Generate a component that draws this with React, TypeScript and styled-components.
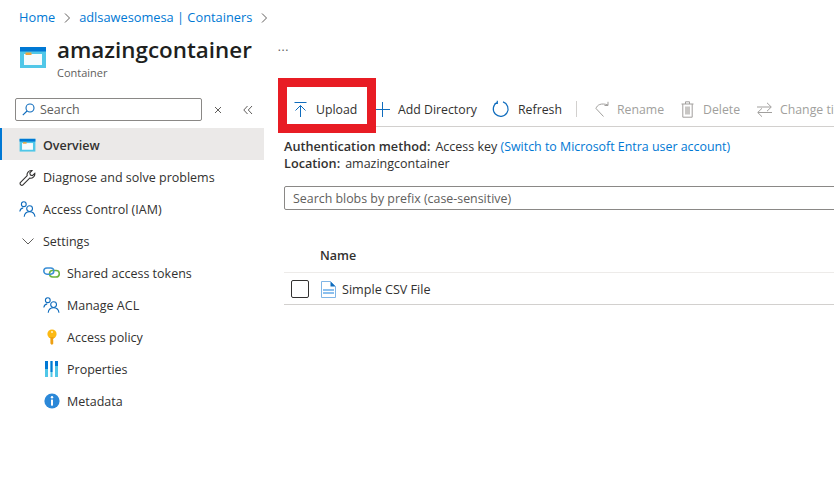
import { FC, ReactNode } from "react";
import styled, { createGlobalStyle } from "styled-components";

const GlobalStyle = createGlobalStyle`
  html, body {
    margin: 0;
    background: #fff;
    overflow: hidden;
  }
  body {
    font-family: "Open Sans", "Noto Sans", sans-serif;
    font-size: 12.5px;
    color: #323130;
  }
`;

const Page = styled.div`
  width: 834px;
  height: 485px;
  overflow: hidden;
`;

const Breadcrumb = styled.div`
  display: flex;
  align-items: center;
  gap: 8px;
  height: 34px;
  padding-left: 19px;
  font-size: 12.8px;
  color: #0078d4;
`;

const Chevron = styled.svg`
  width: 8px;
  height: 10px;
  margin-top: 1px;
`;

const Header = styled.div`
  display: flex;
  height: 50px;
  padding-left: 19px;
`;

const HeaderIcon = styled.div`
  width: 38px;
  padding-top: 10px;
`;

const Title = styled.div`
  font-size: 22.4px;
  line-height: 30px;
  font-weight: 600;
  color: #201f1e;
  margin-top: 1px;
`;

const Subtitle = styled.div`
  font-size: 11px;
  line-height: 16px;
  color: #605e5c;
`;

const More = styled.div`
  margin: 4px 0 0 26px;
  font-size: 12px;
  letter-spacing: 0.5px;
  color: #605e5c;
`;

const Body = styled.div`
  display: flex;
`;

const Sidebar = styled.nav`
  flex: 0 0 264px;
  margin-top: 14px;
`;

const SearchRow = styled.div`
  display: flex;
  align-items: center;
  height: 23px;
  padding-left: 15px;
  margin-bottom: 7px;
`;

const SideSearch = styled.div`
  box-sizing: border-box;
  display: flex;
  align-items: center;
  gap: 5px;
  width: 187px;
  height: 23px;
  padding-left: 6px;
  border: 1px solid #8a8886;
  border-radius: 2px;
  color: #605e5c;
`;

const SideAction = styled.svg<{ $gap: number }>`
  width: 10px;
  height: 10px;
  margin-left: ${({ $gap }) => $gap}px;
`;

const NavRow = styled.div<{ $active?: boolean; $sub?: boolean }>`
  box-sizing: border-box;
  display: flex;
  align-items: center;
  gap: 7px;
  height: 32px;
  padding: 2px 0 0 ${({ $sub }) => ($sub ? "41px" : "17px")};
  color: #323130;
  background: ${({ $active }) => ($active ? "#ebe9e8" : "transparent")};
  border-left: 2px solid ${({ $active }) => ($active ? "#0078d4" : "transparent")};
  font-weight: ${({ $active }) => ($active ? 600 : 400)};
`;

const NavIcon = styled.div`
  display: flex;
  align-items: center;
  justify-content: center;
  width: 17px;
  height: 17px;
`;

const Main = styled.main`
  position: relative;
  flex: 1;
  min-width: 0;
  margin-top: -6px;
  padding: 6px 0 0 20px;
  overflow: hidden;
`;

const Toolbar = styled.div`
  box-sizing: border-box;
  display: flex;
  align-items: center;
  height: 43px;
  padding-top: 8px;
  border-bottom: 1px solid #d2d0ce;
  font-size: 12.3px;
  white-space: nowrap;
`;

const ToolButton = styled.div<{ $disabled?: boolean; $width: number; $gap?: number }>`
  flex: 0 0 ${({ $width }) => $width}px;
  display: flex;
  align-items: center;
  gap: ${({ $gap }) => $gap ?? 7}px;
  color: ${({ $disabled }) => ($disabled ? "#a19f9d" : "#323130")};
`;

const UploadIcon = styled.svg`
  margin-left: 9px;
  margin-right: 1px;
`;

const Divider = styled.div`
  flex: 0 0 1px;
  height: 16px;
  background: #d2d0ce;
  margin-right: 18px;
`;

const Highlight = styled.div`
  position: absolute;
  left: 14px;
  top: 0;
  box-sizing: border-box;
  width: 98px;
  height: 55px;
  border: 9px solid #e81c24;
  pointer-events: none;
`;

const Info = styled.div`
  margin-top: 11px;
  line-height: 17px;
`;

const InfoLabel = styled.span`
  font-weight: 600;
  font-size: 12.7px;
  margin-right: 5px;
`;

const InfoLink = styled.span`
  color: #0078d4;
  font-size: 12.4px;
`;

const BlobSearch = styled.div`
  box-sizing: border-box;
  display: flex;
  align-items: center;
  width: 600px;
  height: 24px;
  margin-top: 14px;
  padding-left: 8px;
  border: 1px solid #8a8886;
  border-radius: 2px;
  font-size: 12.4px;
  color: #605e5c;
`;

const TableRow = styled.div<{ $head?: boolean }>`
  box-sizing: border-box;
  display: flex;
  align-items: center;
  height: ${({ $head }) => ($head ? "34px" : "32px")};
  margin-top: ${({ $head }) => ($head ? "29px" : "0")};
  padding-left: ${({ $head }) => ($head ? "36px" : "7px")};
  padding-top: ${({ $head }) => ($head ? "0" : "1px")};
  border-bottom: 1px solid ${({ $head }) => ($head ? "#edebe9" : "#d2d0ce")};
  font-weight: ${({ $head }) => ($head ? 600 : 400)};
`;

const Checkbox = styled.div`
  box-sizing: border-box;
  width: 18px;
  height: 18px;
  margin-right: 12px;
  border: 1px solid #323130;
  border-radius: 2px;
`;

const FileName = styled.span`
  margin-left: 6px;
  font-size: 12.6px;
`;

const ContainerIcon: FC<{ size: number }> = ({ size }) => (
  <svg width={size} height={size} viewBox="0 0 28 28">
    <rect x="1" y="3" width="26" height="21" fill="#50c7e8" />
    <rect x="1" y="3" width="26" height="4.5" fill="#0078d4" />
    <rect x="5" y="10" width="18" height="11" fill="#f6fbfd" />
    <rect x="6.5" y="8.5" width="6" height="2.5" fill="#eda33c" />
  </svg>
);

const Wrench = () => (
  <svg width="17" height="17" viewBox="0 0 17 17" fill="none" stroke="#323130" strokeWidth="1.1">
    <path d="M1.3 13.6 8.2 6.7C7.5 4.2 9.6 1.2 13 1.6L10.8 4l.6 2 2 .6 2.4-2.3c.5 3.3-2.5 5.5-5.1 4.8l-7 7c-1.2 1-3.2-1-2.4-2.5Z" />
  </svg>
);

const People = () => (
  <svg width="17" height="17" viewBox="0 0 17 17" fill="none" stroke="#0f6cbd" strokeWidth="1.1">
    <circle cx="4.8" cy="3.2" r="2.4" />
    <circle cx="10.6" cy="7.6" r="2.9" />
    <path d="M.8 10.5c.3-2 1.6-3.4 3.4-3.6M5.2 15.8c.3-3 2.5-5 5.4-5s5 2 5.4 5" />
  </svg>
);

const Links = () => (
  <svg width="17" height="12" viewBox="0 0 17 12" fill="none" strokeWidth="1.5">
    <rect x="6.5" y="3.6" width="9.8" height="6.4" rx="3.2" stroke="#6cb33f" />
    <rect x="0.8" y="1" width="10" height="6.2" rx="3.1" stroke="#3b8fd6" />
  </svg>
);

const Key = () => (
  <svg width="12" height="17" viewBox="0 0 12 17">
    <circle cx="6" cy="5" r="4.6" fill="#fcb913" />
    <path d="M4.4 8h3.2v1.6L6.9 11l.7 1-.7 1 .7 1L6 16l-1.6-1.6Z" fill="#ed9f12" />
    <circle cx="6" cy="3" r="1" fill="#fff3c4" />
  </svg>
);

const Properties = () => (
  <svg width="13" height="16" viewBox="0 0 13 16">
    <rect x="0" y="0" width="3" height="16" fill="#50c7e8" />
    <rect x="0" y="0" width="3" height="8" fill="#0078d4" />
    <rect x="5.5" y="0" width="2" height="16" fill="#50c7e8" />
    <rect x="5.5" y="0" width="2" height="11" fill="#0078d4" />
    <rect x="10" y="0" width="3" height="16" fill="#50c7e8" />
    <rect x="10" y="0" width="3" height="5" fill="#0078d4" />
  </svg>
);

const InfoIcon = () => (
  <svg width="16" height="16" viewBox="0 0 16 16">
    <circle cx="8" cy="8" r="7.6" fill="#2b88d8" />
    <circle cx="8" cy="4.3" r="1.2" fill="#fff" />
    <rect x="7" y="6.6" width="2" height="6" fill="#fff" />
  </svg>
);

const FileIcon = () => (
  <svg width="15" height="17" viewBox="0 0 15 17">
    <path d="M.5.5h9l5 5v11H.5Z" fill="#fff" stroke="#7fb5e6" />
    <path d="M9.5.5v5h5Z" fill="#0f6cbd" />
    <rect x="2" y="8" width="11" height="2" fill="#8cc0ee" />
    <rect x="2" y="11" width="11" height="2" fill="#8cc0ee" />
  </svg>
);

const navTop: { label: string; icon: ReactNode; active?: boolean }[] = [
  { label: "Overview", icon: <ContainerIcon size={17} />, active: true },
  { label: "Diagnose and solve problems", icon: <Wrench /> },
  { label: "Access Control (IAM)", icon: <People /> },
  {
    label: "Settings",
    icon: (
      <svg width="12" height="7" viewBox="0 0 12 7" fill="none" stroke="#605e5c">
        <path d="M.5.5 6 6 11.5.5" />
      </svg>
    ),
  },
];

const navSub: { label: string; icon: ReactNode }[] = [
  { label: "Shared access tokens", icon: <Links /> },
  { label: "Manage ACL", icon: <People /> },
  { label: "Access policy", icon: <Key /> },
  { label: "Properties", icon: <Properties /> },
  { label: "Metadata", icon: <InfoIcon /> },
];

export default function App() {
  return (
    <Page>
      <GlobalStyle />
      <Breadcrumb>
        <span>Home</span>
        <Chevron viewBox="0 0 8 10" fill="none" stroke="#605e5c">
          <path d="M2 .5 6.5 5 2 9.500" />
        </Chevron>
        <span>adlsawesomesa | Containers</span>
        <Chevron viewBox="0 0 8 10" fill="none" stroke="#605e5c">
          <path d="M2 .5 6.5 5 2 9.500" />
        </Chevron>
      </Breadcrumb>
      <Header>
        <HeaderIcon>
          <ContainerIcon size={28} />
        </HeaderIcon>
        <div>
          <Title>amazingcontainer</Title>
          <Subtitle>Container</Subtitle>
        </div>
        <More>...</More>
      </Header>
      <Body>
        <Sidebar>
          <SearchRow>
            <SideSearch>
              <svg width="13" height="13" viewBox="0 0 13 13" fill="none" stroke="#0f6cbd" strokeWidth="1.1">
                <circle cx="8" cy="5" r="4" />
                <path d="M5 8 .8 12.200" />
              </svg>
              Search
            </SideSearch>
            <SideAction $gap={11} viewBox="0 0 10 10" fill="none" stroke="#605e5c">
              <path d="m2 2 6 6M8 2 2 8" />
            </SideAction>
            <SideAction $gap={20} viewBox="0 0 10 10" fill="none" stroke="#605e5c">
              <path d="M4.500 1 .8 5l3.700 4M9 1 5.300 5 9 9" />
            </SideAction>
          </SearchRow>
          {navTop.map((n) => (
            <NavRow key={n.label} $active={n.active}>
              <NavIcon>{n.icon}</NavIcon>
              {n.label}
            </NavRow>
          ))}
          {navSub.map((n) => (
            <NavRow key={n.label} $sub>
              <NavIcon>{n.icon}</NavIcon>
              {n.label}
            </NavRow>
          ))}
        </Sidebar>
        <Main>
          <Toolbar>
            <ToolButton $width={91}>
              <UploadIcon width="15" height="17" viewBox="0 0 15 17" fill="none" stroke="#0f6cbd">
                <path d="M1.500 1.500h12M7.500 16V4.500M2.500 9.500l5-5 5 5" />
              </UploadIcon>
              Upload
            </ToolButton>
            <ToolButton $width={117} $gap={8}>
              <svg width="15" height="15" viewBox="0 0 15 15" fill="none" stroke="#0f6cbd">
                <path d="M7.500 0v15M0 7.500h15" />
              </svg>
              Add Directory
            </ToolButton>
            <ToolButton $width={84} $gap={8}>
              <svg width="18" height="18" viewBox="0 0 18 18" fill="none" stroke="#0f6cbd" strokeWidth="1.2">
                <path d="M5 2.500a7.400 7.400 0 1 0 6-.6M5.300.8v2.700H2.500" />
              </svg>
              Refresh
            </ToolButton>
            <Divider />
            <ToolButton $disabled $width={86}>
              <svg width="15" height="17" viewBox="0 0 15 17" fill="none" stroke="#a19f9d">
                <path d="M1 7.500C2 4 6 1.500 13 4M13 .8V4.500H9.500M1 7.500l7.500 8" />
              </svg>
              Rename
            </ToolButton>
            <ToolButton $disabled $width={76} $gap={9}>
              <svg width="13" height="17" viewBox="0 0 13 17" fill="none" stroke="#a19f9d">
                <path d="M.5 3h12M4.500 3V.8h4V3M1.800 3v13.200h9.400V3" />
                <rect x="4" y="5.500" width="5" height="8" fill="#c8c6c4" stroke="none" />
              </svg>
              Delete
            </ToolButton>
            <ToolButton $disabled $width={120} $gap={8}>
              <svg width="15" height="15" viewBox="0 0 15 15" fill="none" stroke="#a19f9d">
                <path d="M0 5h14M10 .8 14.300 5 10 9.200M15 10.500H1M5 6.300.7 10.500 5 14.700" />
              </svg>
              Change tier
            </ToolButton>
          </Toolbar>
          <Highlight />
          <Info>
            <div>
              <InfoLabel>Authentication method:</InfoLabel>
              Access key <InfoLink>(Switch to Microsoft Entra user account)</InfoLink>
            </div>
            <div>
              <InfoLabel>Location:</InfoLabel>
              amazingcontainer
            </div>
          </Info>
          <BlobSearch>Search blobs by prefix (case-sensitive)</BlobSearch>
          <TableRow $head>Name</TableRow>
          <TableRow>
            <Checkbox />
            <FileIcon />
            <FileName>Simple CSV File</FileName>
          </TableRow>
        </Main>
      </Body>
    </Page>
  );
}
